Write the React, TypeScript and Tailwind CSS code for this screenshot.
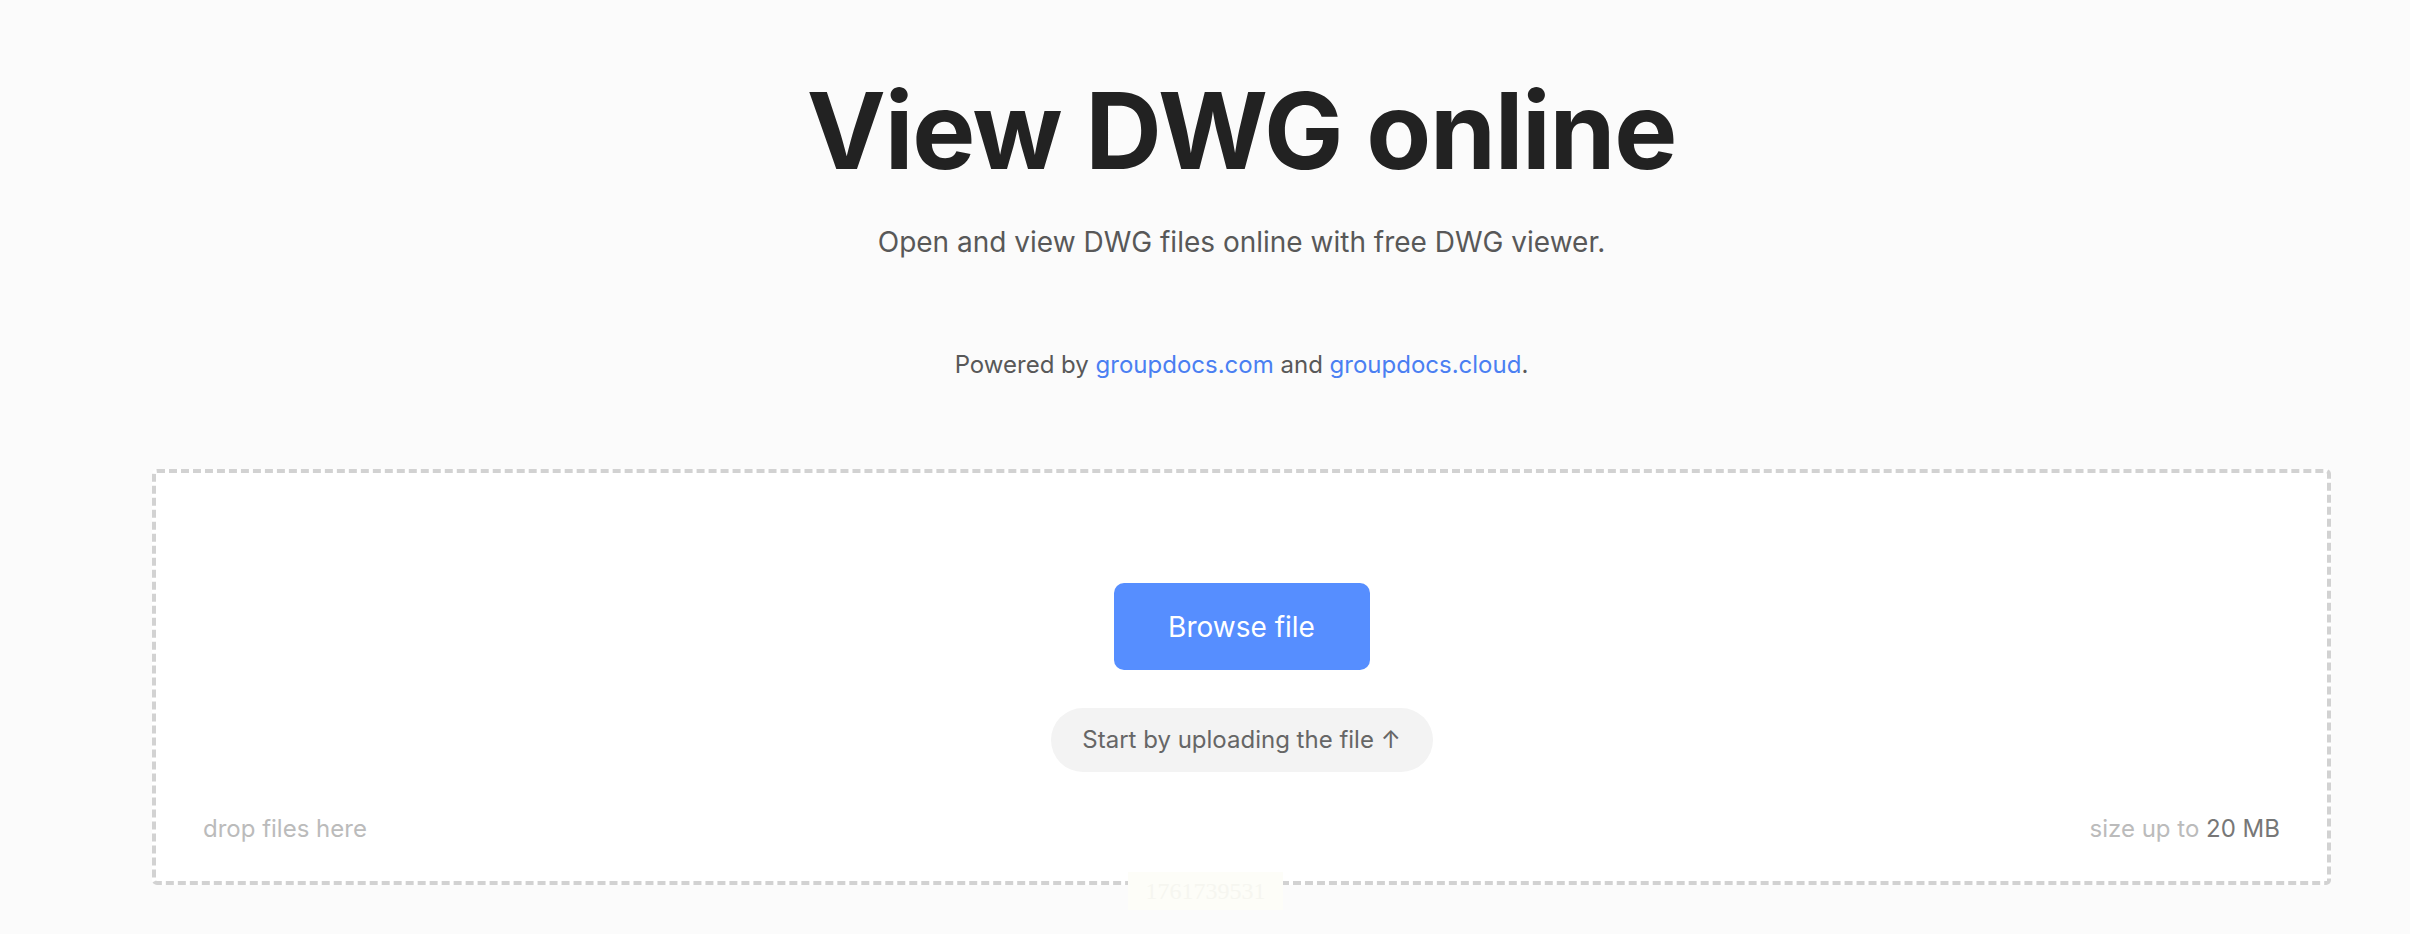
const App = () => {
    return (
        <div className="relative min-h-screen w-full bg-[#fbfbfb] font-['Inter','Noto_Sans',sans-serif] pl-[152px] pr-[79px]">
            <div className="flex flex-col items-center">
                <h1 className="mt-[78px] text-[106px] leading-none font-bold tracking-[-0.012em] text-[#222222]">
                    View DWG online
                </h1>
                <p className="mt-[44px] text-[28px] leading-none text-[#585858]">
                    Open and view DWG files online with free DWG viewer.
                </p>
                <p className="mt-[97px] text-[24px] leading-none text-[#585858]">
                    Powered by{" "}
                    <a href="#" className="text-[#4a7ff2]">groupdocs.com</a> and{" "}
                    <a href="#" className="text-[#4a7ff2]">groupdocs.cloud</a>.
                </p>
            </div>

            <div className="mt-[92px] h-[416px] flex flex-col items-center rounded-[5px] border-[4px] border-dashed border-[#d2d2d2] bg-white">
                <button
                    type="button"
                    className="mt-[110px] h-[87px] w-[256px] rounded-[10px] bg-[#568eff] text-[28px] text-white"
                >
                    Browse file
                </button>
                <div className="mt-[38px] flex h-[64px] w-[382px] items-center justify-center rounded-full bg-[#f3f3f3] text-[24px] text-[#666666]">
                    Start by uploading the file ↑
                </div>
                <div className="mt-[45px] flex w-full justify-between px-[47px] text-[24px] leading-none">
                    <span className="text-[#bbbbbb]">drop files here</span>
                    <span className="text-[#bbbbbb]">
                        size up to <span className="text-[#777777]">20 MB</span>
                    </span>
                </div>
            </div>

            <div className="absolute left-[1128px] top-[872px] flex h-[38px] w-[155px] items-center justify-center bg-[#fdfdf8] font-['Liberation_Serif',serif] text-[24px] text-[#f6f6f0]">
                1761739531
            </div>
        </div>
    );
};

export default App;
